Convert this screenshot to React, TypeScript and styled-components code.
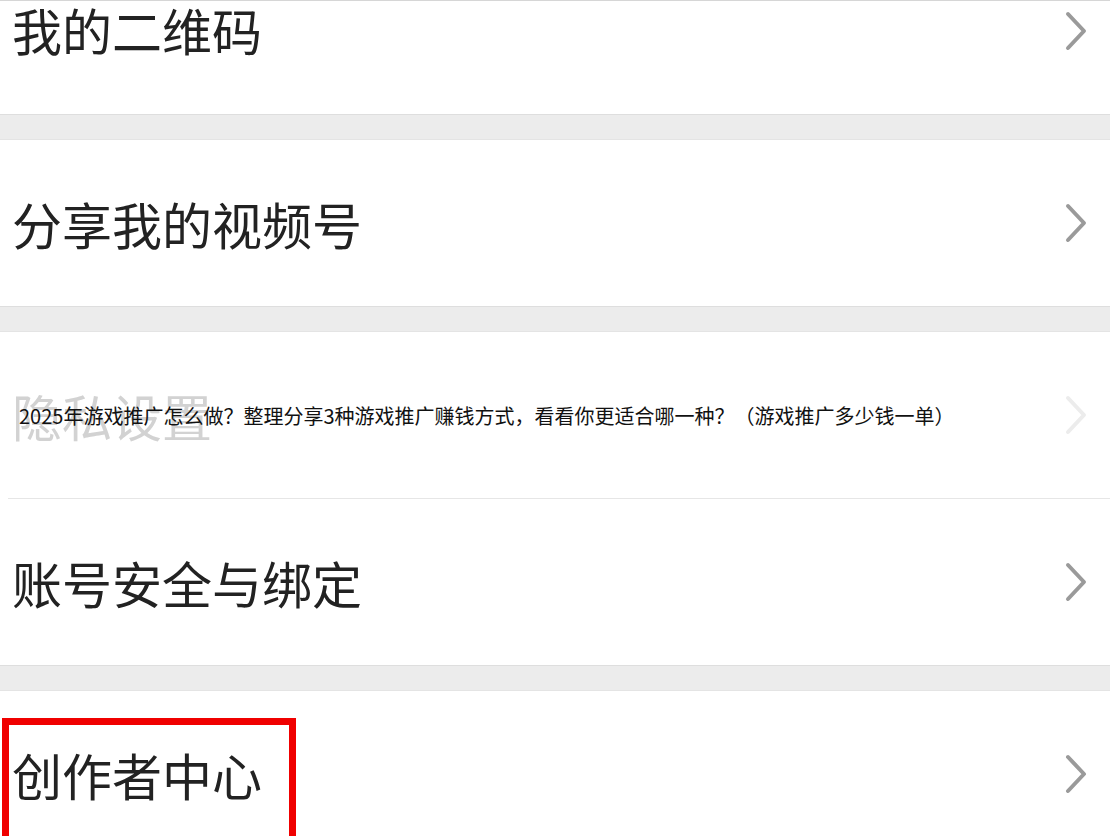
import React from 'react'
import styled, { createGlobalStyle } from 'styled-components'

const GlobalStyle = createGlobalStyle`
  html, body {
    margin: 0;
    padding: 0;
    background: #ffffff;
    overflow: hidden;
  }
  body {
    font-family: "Noto Sans CJK SC", "Noto Sans", sans-serif;
  }
`

const Page = styled.div`
  width: 1110px;
  height: 836px;
  overflow: hidden;
  border-top: 1px solid #d6d6d6;
  box-sizing: border-box;
`

// list is scrolled a little, first row is cut at the top
const List = styled.div`
  margin-top: -53px;
  display: flex;
  flex-direction: column;
`

const Row = styled.div<{ $tall?: number }>`
  position: relative;
  height: ${(p) => p.$tall ?? 166}px;
  display: flex;
  align-items: center;
  justify-content: space-between;
  padding: 0 20px 0 12px;
  background: #fff;
`

const Label = styled.span<{ $faded?: boolean; $lift?: number }>`
  font-size: 50px;
  font-weight: 400;
  line-height: 1;
  margin-top: ${(p) => -(p.$lift ?? 0)}px;
  color: ${(p) => (p.$faded ? '#d2d2d2' : '#222')};
`

const Band = styled.div`
  height: 24px;
  background: #ececec;
  border-top: 1px solid #dedede;
  border-bottom: 1px solid #e4e4e4;
`

const Divider = styled.div`
  height: 1px;
  margin-left: 8px;
  background: #e6e6e6;
`

const Caption = styled.div`
  position: absolute;
  left: 19px;
  top: 50%;
  transform: translateY(-50%);
  font-size: 20px;
  font-weight: 400;
  color: #111;
  white-space: nowrap;
`

const Mark = styled.div`
  position: absolute;
  left: 2px;
  top: 27px;
  width: 294px;
  height: 200px;
  border: 7px solid #f00000;
  box-sizing: border-box;
  pointer-events: none;
`

const Chevron: React.FC<{ faded?: boolean }> = ({ faded }) => (
  <svg width="26" height="40" viewBox="0 0 26 40">
    <polyline
      points="4,3 20,20 4,37"
      fill="none"
      stroke={faded ? '#ececec' : '#9a9a9a'}
      strokeWidth="4"
      strokeLinecap="round"
      strokeLinejoin="round"
    />
  </svg>
)

const App: React.FC = () => {
  return (
    <Page>
      <GlobalStyle />
      <List>
        <Row>
          <Label $lift={4}>我的二维码</Label>
          <Chevron />
        </Row>
        <Band />
        <Row>
          <Label>分享我的视频号</Label>
          <Chevron />
        </Row>
        <Band />
        <Row>
          <Label $faded>隐私设置</Label>
          <Chevron faded />
          <Caption>
            2025年游戏推广怎么做？整理分享3种游戏推广赚钱方式，看看你更适合哪一种？（游戏推广多少钱一单）
          </Caption>
        </Row>
        <Divider />
        <Row>
          <Label>账号安全与绑定</Label>
          <Chevron />
        </Row>
        <Band />
        <Row>
          <Label>创作者中心</Label>
          <Chevron />
          <Mark />
        </Row>
      </List>
    </Page>
  )
}

export default App
